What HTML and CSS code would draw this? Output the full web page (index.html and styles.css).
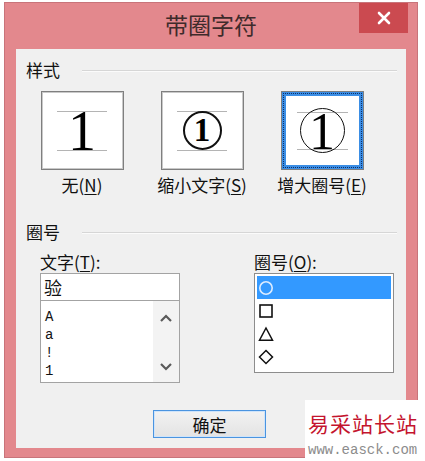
FILE: index.html
```html
<!DOCTYPE html>
<html lang="zh-CN">

<head>
  <meta charset="UTF-8" />
  <title>带圈字符</title>
  <link rel="stylesheet" href="styles.css">
</head>

<body>
  <div class="window">
    <div class="titlebar">
      <span class="title">带圈字符</span>
      <span class="close">
        <svg width="14" height="14" viewBox="0 0 14 14">
          <path d="M2 2 L12 12 M12 2 L2 12" stroke="#fff" stroke-width="2.6" stroke-linecap="round" />
        </svg>
      </span>
    </div>

    <div class="client">
      <!-- Style -->
      <div class="group-head"><span>样式</span><i class="rule"></i></div>
      <div class="styles">
        <div class="style-item">
          <div class="style-box">
            <div class="guide"><span class="digit">1</span></div>
          </div>
          <div class="style-label">无(<u>N</u>)</div>
        </div>
        <div class="style-item">
          <div class="style-box">
            <div class="guide"><span class="ring ring-small">1</span></div>
          </div>
          <div class="style-label">缩小文字(<u>S</u>)</div>
        </div>
        <div class="style-item">
          <div class="style-box selected">
            <div class="guide guide-large"><span class="ring ring-large">1</span></div>
          </div>
          <div class="style-label">增大圈号(<u>E</u>)</div>
        </div>
      </div>

      <!-- Enclosure -->
      <div class="group-head second"><span>圈号</span><i class="rule"></i></div>
      <div class="fields">
        <div class="field">
          <div class="field-label">文字(<u>T</u>):</div>
          <div class="text-input">验</div>
          <div class="char-list">
            <ul>
              <li>A</li>
              <li>a</li>
              <li>!</li>
              <li>1</li>
            </ul>
            <div class="scrollbar">
              <svg width="14" height="9" viewBox="0 0 14 9">
                <path d="M2 7 L7 2 L12 7" fill="none" stroke="#5a5a5a" stroke-width="2.2" />
              </svg>
              <svg width="14" height="9" viewBox="0 0 14 9">
                <path d="M2 2 L7 7 L12 2" fill="none" stroke="#5a5a5a" stroke-width="2.2" />
              </svg>
            </div>
          </div>
        </div>

        <div class="field">
          <div class="field-label">圈号(<u>O</u>):</div>
          <ul class="ring-list">
            <li class="active">
              <svg width="16" height="16" viewBox="0 0 16 16">
                <circle cx="8" cy="8" r="6.2" fill="none" stroke="#dcecff" stroke-width="1.6" />
              </svg>
            </li>
            <li>
              <svg width="16" height="16" viewBox="0 0 16 16">
                <rect x="2" y="2" width="12" height="12" fill="none" stroke="#111" stroke-width="1.6" />
              </svg>
            </li>
            <li>
              <svg width="16" height="16" viewBox="0 0 16 16">
                <path d="M8 2 L14.5 14.2 L1.5 14.2 Z" fill="none" stroke="#111" stroke-width="1.5" />
              </svg>
            </li>
            <li>
              <svg width="16" height="16" viewBox="0 0 16 16">
                <path d="M8 1.5 L14.5 8 L8 14.5 L1.5 8 Z" fill="none" stroke="#111" stroke-width="1.5" />
              </svg>
            </li>
          </ul>
        </div>
      </div>

      <div class="actions">
        <button class="ok">确定</button>
      </div>
    </div>
  </div>

  <!-- Site watermark -->
  <div class="watermark">
    <div class="wm-name">易采站长站</div>
    <div class="wm-url">www.easck.com</div>
  </div>
</body>

</html>
```

FILE: styles.css
```css
/* Page */
body {
  margin: 0;
  background-color: #ffffff;
  font-family: "Noto Sans CJK SC", sans-serif;
  color: #111;
}

ul {
  list-style: none;
  margin: 0;
  padding: 0;
}

u {
  text-decoration-thickness: 1px;
  text-underline-offset: 2px;
}

/* Window frame */
.window {
  width: 412px;
  margin: 2px 0 0 4px;
  padding-bottom: 9px;
  background-color: #e3888d;
  border: 1px solid #c8747a;
}

.titlebar {
  position: relative;
  height: 46px;
  display: flex;
  align-items: center;
  justify-content: center;
}

.title {
  font-size: 23px;
  line-height: 1;
  color: #3f2b2b;
  margin-top: -3px;
}

.close {
  position: absolute;
  top: 0;
  right: 9px;
  width: 49px;
  height: 30px;
  background-color: #cb4a50;
  display: flex;
  align-items: center;
  justify-content: center;
}

.client {
  margin: 0 11px;
  height: 399px;
  background-color: #f0f0f0;
  box-sizing: border-box;
  padding-top: 11px;
  font-size: 17px;
}

/* Group headings */
.group-head {
  display: flex;
  align-items: center;
  height: 20px;
  line-height: 20px;
  padding-left: 10px;
  margin-right: 9px;
}

.group-head span {
  width: 56px;
}

.group-head .rule {
  flex: 1;
  border-top: 1px solid #d6d6d6;
  border-bottom: 1px solid #fbfbfb;
  margin-top: 2px;
}

.group-head.second {
  margin-top: 27px;
}

/* Style choices */
.styles {
  display: flex;
  padding-left: 6px;
  margin-top: 11px;
}

.style-item {
  width: 120px;
  display: flex;
  flex-direction: column;
  align-items: center;
}

.style-box {
  width: 83px;
  height: 79px;
  box-sizing: border-box;
  background-color: #fff;
  border: 1px solid #7f7f7f;
  box-shadow: inset 0 0 0 1px #c9c9c9;
  display: flex;
  align-items: center;
  justify-content: center;
}

.style-box.selected {
  box-shadow: inset 0 0 0 4px #3a8de4;
  outline: 1px dotted #0d2f66;
  outline-offset: -3px;
}

.guide {
  width: 50px;
  height: 38px;
  border-top: 1px solid #b4b4b4;
  border-bottom: 1px solid #b4b4b4;
  display: flex;
  align-items: center;
  justify-content: center;
}

.guide-large {
  width: 51px;
  height: 36px;
}

.digit {
  font-family: "Liberation Serif", serif;
  font-size: 56px;
  line-height: 38px;
  height: 38px;
  color: #000;
}

.ring {
  box-sizing: border-box;
  border-radius: 50%;
  border: 2px solid #111;
  display: flex;
  align-items: center;
  justify-content: center;
  font-family: "Liberation Serif", serif;
  color: #000;
  flex-shrink: 0;
}

.ring-small {
  width: 39px;
  height: 39px;
  font-size: 33px;
  font-weight: bold;
  line-height: 1;
}

.ring-large {
  width: 45px;
  height: 45px;
  margin: -5px 0;
  border-width: 1.5px;
  font-size: 52px;
  line-height: 1;
  padding-top: 3px;
}

.style-label {
  margin-top: 5px;
  height: 20px;
  line-height: 20px;
  white-space: nowrap;
}

/* Fields */
.fields {
  display: flex;
  gap: 74px;
  padding-left: 24px;
  margin-top: 10px;
}

.field {
  width: 140px;
}

.field-label {
  height: 20px;
  line-height: 20px;
  margin-bottom: 1px;
}

.text-input {
  height: 28px;
  box-sizing: border-box;
  border: 1px solid #a3a3a3;
  background-color: #fff;
  padding-left: 3px;
  line-height: 26px;
  font-size: 18px;
}

.char-list {
  height: 82px;
  box-sizing: border-box;
  border: 1px solid #a3a3a3;
  border-top: none;
  background-color: #fff;
  display: flex;
}

.char-list ul {
  flex: 1;
  padding: 7px 0 0 4px;
  font-family: "Liberation Mono", monospace;
  font-size: 14px;
  line-height: 18px;
}

.scrollbar {
  width: 26px;
  background-color: #f3f3f3;
  display: flex;
  flex-direction: column;
  align-items: center;
  justify-content: space-between;
  padding: 13px 0 11px;
}

.ring-list {
  height: 100px;
  box-sizing: border-box;
  border: 1px solid #8d8d8d;
  background-color: #fff;
  padding: 2px;
}

.ring-list li {
  height: 23px;
  display: flex;
  align-items: center;
  padding-left: 1px;
}

.ring-list li.active {
  background-color: #3399ff;
}

/* Buttons */
.actions {
  display: flex;
  padding-left: 137px;
  margin-top: 27px;
}

.ok {
  width: 113px;
  height: 28px;
  border: 1px solid #4a94e0;
  box-shadow: inset 0 0 0 1px #cfe4fa;
  background: linear-gradient(#f2f2f2, #e3e3e3);
  font-family: "Noto Sans CJK SC", sans-serif;
  font-size: 17px;
  line-height: 1;
  color: #111;
  padding: 0;
}

/* Watermark laid over the dialog corner */
.watermark {
  position: absolute;
  left: 305px;
  top: 400px;
  width: 120px;
  height: 61px;
  background-color: #fff;
  padding-left: 3px;
  box-sizing: border-box;
}

.wm-name {
  font-size: 21px;
  line-height: 31px;
  margin-top: 8px;
  color: #c4142e;
  letter-spacing: 1px;
  white-space: nowrap;
}

.wm-url {
  font-family: "Liberation Mono", monospace;
  font-size: 14px;
  line-height: 16px;
  margin-top: 3px;
  color: #8c8c8c;
  white-space: nowrap;
}
```
